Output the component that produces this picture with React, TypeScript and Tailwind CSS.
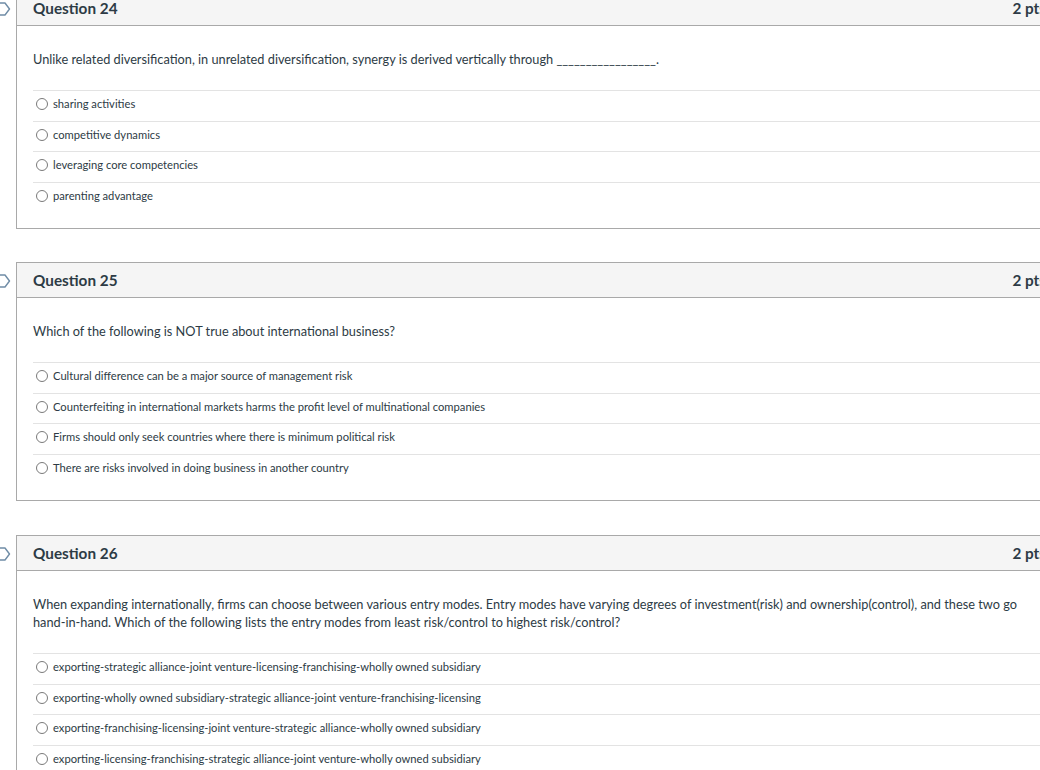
import React from "react";

type Q = { title: string; text: React.ReactNode; answers: string[] };

const questions: Q[] = [
  {
    title: "Question 24",
    text: (
      <>Unlike related diversification, in unrelated diversification, synergy is derived vertically through _________________.</>
    ),
    answers: ["sharing activities", "competitive dynamics", "leveraging core competencies", "parenting advantage"],
  },
  {
    title: "Question 25",
    text: <>Which of the following is NOT true about international business?</>,
    answers: [
      "Cultural difference can be a major source of management risk",
      "Counterfeiting in international markets harms the profit level of multinational companies",
      "Firms should only seek countries where there is minimum political risk",
      "There are risks involved in doing business in another country",
    ],
  },
  {
    title: "Question 26",
    text: (
      <>
        When expanding internationally, firms can choose between various entry modes. Entry modes have varying degrees of investment(risk) and ownership(control), and these two go
        <br />
        hand-in-hand. Which of the following lists the entry modes from least risk/control to highest risk/control?
      </>
    ),
    answers: [
      "exporting-strategic alliance-joint venture-licensing-franchising-wholly owned subsidiary",
      "exporting-wholly owned subsidiary-strategic alliance-joint venture-franchising-licensing",
      "exporting-franchising-licensing-joint venture-strategic alliance-wholly owned subsidiary",
      "exporting-licensing-franchising-strategic alliance-joint venture-wholly owned subsidiary",
    ],
  },
];

function Marker() {
  return (
    <svg className="absolute left-0 top-[11px]" width="14" height="16" viewBox="0 0 14 16">
      <path d="M-6 2 H5 L9.5 8 L5 14 H-6" fill="none" stroke="#6f8ca6" strokeWidth="1.4" strokeLinejoin="round" />
    </svg>
  );
}

function Card({ q, className }: { q: Q; className?: string }) {
  return (
    <div className={"relative pl-4 " + (className ?? "")}>
      <Marker />
      <div className="w-[1047px] border border-[#a9a9a9] bg-white">
        <div className="flex h-[35px] items-center justify-between border-b border-[#a9a9a9] bg-[#f5f5f5] px-4 text-[15.3px] font-bold text-[#2d3b45]">
          <span>{q.title}</span>
          <span>2 pts</span>
        </div>
        <div className="px-4 pb-4">
          <div className="whitespace-nowrap pt-[24px] pb-[22px] text-[12.75px] leading-[18px] text-[#2d3b45]">{q.text}</div>
          {q.answers.map((a) => (
            <div key={a} className="flex h-[30.5px] items-start border-t border-[#e3e3e3] pl-[3px] pt-[5px]">
              <span className="mt-[2px] inline-block h-[12px] w-[12px] shrink-0 rounded-full border border-[#7a7a7a]" />
              <span className="ml-[5px] text-[11.2px] leading-[16px] text-[#2d3b45]">{a}</span>
            </div>
          ))}
        </div>
      </div>
    </div>
  );
}

export default function App() {
  return (
    <div className="h-[770px] w-[1040px] overflow-hidden bg-white" style={{ fontFamily: "Lato, 'Liberation Sans', sans-serif" }}>
      <div className="-mt-[10px]">
        <Card q={questions[0]} />
        <Card q={questions[1]} className="mt-[33px]" />
        <Card q={questions[2]} className="mt-[34px]" />
      </div>
    </div>
  );
}
